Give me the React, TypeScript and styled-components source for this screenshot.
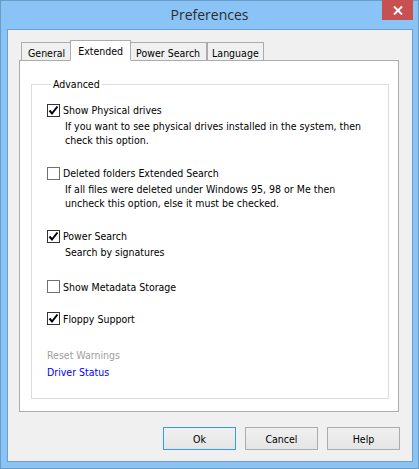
import * as React from "react";
import styled, { createGlobalStyle } from "styled-components";

const GlobalStyle = createGlobalStyle`
  html, body {
    margin: 0;
    padding: 0;
    background: #ffffff;
  }
  body {
    font-family: "DejaVu Sans Condensed", "Liberation Sans", Arial, sans-serif;
    font-stretch: condensed;
    font-size: 10.5px;
    color: #000;
  }
`;

const Frame = styled.div`
  box-sizing: border-box;
  width: 419px;
  height: 469px;
  background: #8ac4f6;
  border: 1px solid #6a9cc8;
  display: flex;
  flex-direction: column;
`;

const TitleBar = styled.div`
  height: 29px;
  display: grid;
  grid-template-columns: 1fr auto 1fr;
  align-items: start;
`;

const Title = styled.div`
  grid-column: 2;
  font-family: "Segoe UI", "Open Sans", "Liberation Sans", sans-serif;
  font-stretch: normal;
  font-size: 14px;
  color: #2b2b2b;
  line-height: 28px;
`;

const CloseButton = styled.button`
  grid-column: 3;
  justify-self: end;
  margin-right: 5px;
  width: 31px;
  height: 20px;
  border: none;
  padding: 0;
  background: #c75050;
  display: flex;
  align-items: center;
  justify-content: center;
  margin-top: -1px;
`;

const Client = styled.div`
  flex: 1;
  margin: 0 5px 6px 6px;
  border: 1px solid #6f9ccb;
  background: #f0f0f0;
  display: flex;
  flex-direction: column;
  padding: 10px 13px 11px 11px;
`;

const TabStrip = styled.div`
  display: flex;
  align-items: flex-end;
  height: 20px;
  position: relative;
  z-index: 1;
`;

const Tab = styled.div<{ $active?: boolean }>`
  box-sizing: border-box;
  height: ${(p) => (p.$active ? "21px" : "18px")};
  padding: 0 ${(p) => (p.$active ? "7px" : "6px")};
  margin: 0 ${(p) => (p.$active ? "-2px" : "0")};
  border: 1px solid #acacac;
  border-bottom: ${(p) => (p.$active ? "1px solid #ffffff" : "none")};
  background: ${(p) => (p.$active ? "#ffffff" : "#f0f0f0")};
  margin-bottom: ${(p) => (p.$active ? "-1px" : "0")};
  z-index: ${(p) => (p.$active ? 2 : 1)};
  display: flex;
  align-items: center;
  padding-top: ${(p) => (p.$active ? "0" : "2px")};
  color: #000;
  white-space: nowrap;
  &:first-child {
    margin-left: 2px;
  }
  &:last-child {
    padding: 2px 4px 0;
  }
`;

const Panel = styled.div`
  box-sizing: border-box;
  height: 352px;
  background: #ffffff;
  border: 1px solid #acacac;
  padding: 17px 9px 12px 11px;
  display: flex;
`;

const Group = styled.fieldset`
  flex: 1;
  margin: 0;
  border: 1px solid #dcdcdc;
  padding: 12px 10px 0 15px;
  display: flex;
  flex-direction: column;
`;

const Legend = styled.legend`
  padding: 0 2px;
  margin-left: 4px;
`;

const Option = styled.div<{ $after: number }>`
  display: flex;
  flex-direction: column;
  margin-bottom: ${(p) => p.$after}px;
`;

const CheckRow = styled.label`
  display: flex;
  align-items: center;
  gap: 3px;
  height: 16px;
  white-space: nowrap;
`;

const Box = styled.span<{ $checked?: boolean }>`
  box-sizing: border-box;
  width: 13px;
  height: 13px;
  border: 1px solid ${(p) => (p.$checked ? "#333333" : "#707070")};
  background: #fff;
  display: flex;
  align-items: center;
  justify-content: center;
`;

const Desc = styled.div`
  padding-left: 18px;
  margin-top: 2px;
  margin-bottom: 2px;
  line-height: 13.5px;
  white-space: nowrap;
`;

const Links = styled.div`
  display: flex;
  flex-direction: column;
  margin-top: 5px;
  gap: 3px;
`;

const Link = styled.span<{ $disabled?: boolean }>`
  color: ${(p) => (p.$disabled ? "#a0a0a0" : "#0000ff")};
  line-height: 14px;
`;

const ButtonRow = styled.div`
  display: flex;
  justify-content: flex-end;
  gap: 9px;
  margin-top: 15px;
  margin-right: -1px;
`;

const Button = styled.button<{ $focused?: boolean }>`
  box-sizing: border-box;
  width: 73px;
  height: 23px;
  background: linear-gradient(#f0f0f0, #e5e5e5);
  border: 1px solid ${(p) => (p.$focused ? "#3399ff" : "#acacac")};
  font-family: inherit;
  font-stretch: condensed;
  font-size: 10.5px;
  color: #000;
  padding: 0;
`;

const Check = () => (
  <svg width="11" height="11" viewBox="0 0 11 11">
    <path d="M1.5 5.5 L4 8.5 L9.5 1.5" fill="none" stroke="#000" strokeWidth="2" />
  </svg>
);

type IOptionProps = {
  label: string;
  checked?: boolean;
  lines?: string[];
  after?: number;
};

const CheckOption = (props: IOptionProps): React.ReactElement => (
  <Option $after={props.after ?? 16}>
    <CheckRow>
      <Box $checked={props.checked}>{props.checked ? <Check /> : null}</Box>
      {props.label}
    </CheckRow>
    {props.lines ? (
      <Desc>
        {props.lines.map((l) => (
          <div key={l}>{l}</div>
        ))}
      </Desc>
    ) : null}
  </Option>
);

const App = (): React.ReactElement => (
  <>
    <GlobalStyle />
    <Frame>
      <TitleBar>
        <Title>Preferences</Title>
        <CloseButton>
          <svg width="10" height="9" viewBox="0 0 10 9">
            <path d="M1 0.5 L9 8.5 M9 0.5 L1 8.5" stroke="#fff" strokeWidth="2" />
          </svg>
        </CloseButton>
      </TitleBar>
      <Client>
        <TabStrip>
          <Tab>General</Tab>
          <Tab $active>Extended</Tab>
          <Tab>Power Search</Tab>
          <Tab>Language</Tab>
        </TabStrip>
        <Panel>
          <Group>
            <Legend>Advanced</Legend>
            <CheckOption
              checked
              label="Show Physical drives"
              lines={[
                "If you want to see physical drives installed in the system, then",
                "check this option.",
              ]}
            />
            <CheckOption
              label="Deleted folders Extended Search"
              lines={[
                "If all files were deleted under Windows 95, 98 or Me then",
                "uncheck this option, else it must be checked.",
              ]}
            />
            <CheckOption checked label="Power Search" lines={["Search by signatures"]} after={17} />
            <CheckOption label="Show Metadata Storage" />
            <CheckOption checked label="Floppy Support" />
            <Links>
              <Link $disabled>Reset Warnings</Link>
              <Link>Driver Status</Link>
            </Links>
          </Group>
        </Panel>
        <ButtonRow>
          <Button $focused>Ok</Button>
          <Button>Cancel</Button>
          <Button>Help</Button>
        </ButtonRow>
      </Client>
    </Frame>
  </>
);

export default App;
